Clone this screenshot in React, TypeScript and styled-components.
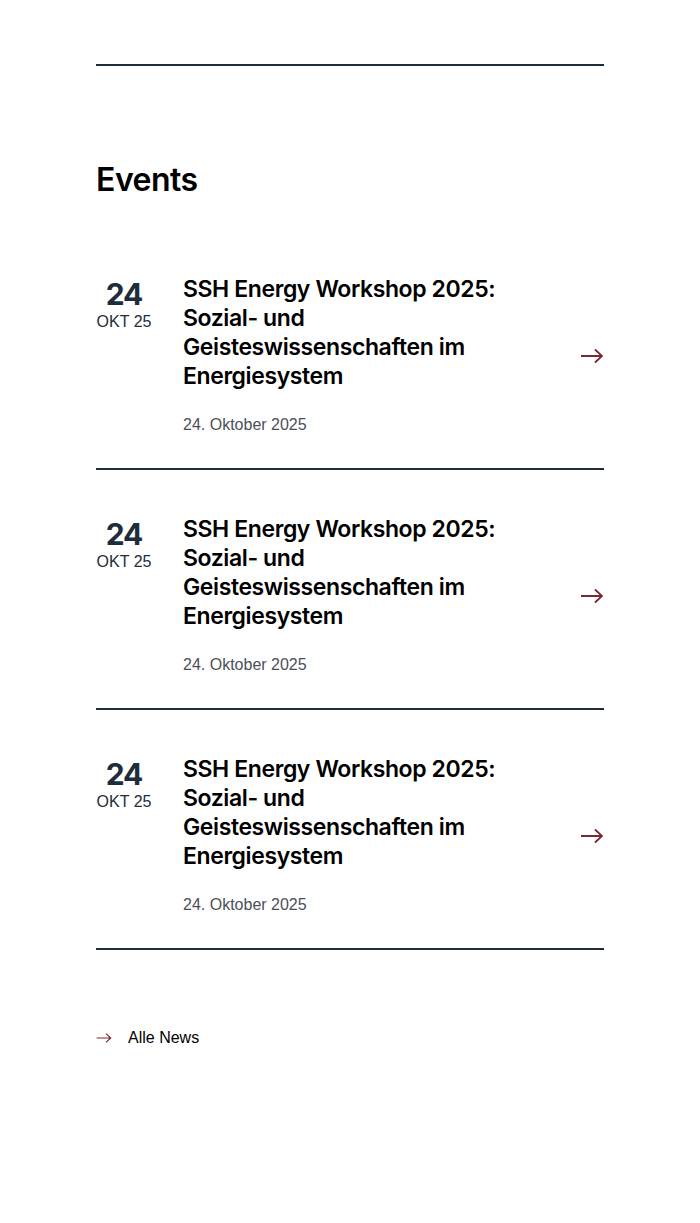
import React from "react";
import styled, { createGlobalStyle } from "styled-components";

const GlobalStyle = createGlobalStyle`
  html, body {
    margin: 0;
    padding: 0;
    background: #fff;
    font-family: "Liberation Sans", Arial, sans-serif;
  }
`;

interface EventItem {
  day: string;
  month: string;
  title: string;
  date: string;
}

const events: EventItem[] = [
  {
    day: "24",
    month: "OKT 25",
    title: "SSH Energy Workshop 2025: Sozial- und Geisteswissenschaften im Energiesystem",
    date: "24. Oktober 2025",
  },
  {
    day: "24",
    month: "OKT 25",
    title: "SSH Energy Workshop 2025: Sozial- und Geisteswissenschaften im Energiesystem",
    date: "24. Oktober 2025",
  },
  {
    day: "24",
    month: "OKT 25",
    title: "SSH Energy Workshop 2025: Sozial- und Geisteswissenschaften im Energiesystem",
    date: "24. Oktober 2025",
  },
];

const Arrow = ({ size = 24 }: { size?: number }) => (
  <svg width={size} height={size} viewBox="0 0 24 24" fill="none">
    <path
      d="M1 12H22M15 5.5L22 12L15 18.5"
      stroke="#7a2832"
      strokeWidth="1.8"
      strokeLinecap="butt"
      strokeLinejoin="miter"
    />
  </svg>
);

const App = () => {
  return (
    <>
      <GlobalStyle />
      <Wrapper>
        <TopRule />
        <Heading>Events</Heading>
        <List>
          {events.map((ev, i) => (
            <Row key={i}>
              <DateBox>
                <Day>{ev.day}</Day>
                <Month>{ev.month}</Month>
              </DateBox>
              <Body>
                <Title>{ev.title}</Title>
                <Meta>{ev.date}</Meta>
              </Body>
              <RowArrow>
                <Arrow />
              </RowArrow>
            </Row>
          ))}
        </List>
        <MoreLink>
          <Arrow size={16} />
          <span>Alle News</span>
        </MoreLink>
      </Wrapper>
    </>
  );
};

const Wrapper = styled.div`
  width: 508px;
  margin: 0 auto;
  padding-top: 64px;
  padding-bottom: 160px;
`;

const TopRule = styled.div`
  height: 2px;
  background: #1e2d3a;
`;

const Heading = styled.h2`
  font-family: Inter, "Liberation Sans", sans-serif;
  font-size: 32px;
  font-weight: 600;
  letter-spacing: -0.5px;
  line-height: 40px;
  color: #000;
  margin: 94px 0 30px;
`;

const List = styled.div`
  display: flex;
  flex-direction: column;
`;

const Row = styled.div`
  display: flex;
  align-items: center;
  padding: 45px 0 31px;
  border-bottom: 2px solid #1e2d3a;
`;

const DateBox = styled.div`
  align-self: flex-start;
  display: flex;
  flex-direction: column;
  align-items: center;
  width: 56px;
  margin-right: 31px;
`;

const Day = styled.div`
  font-family: Inter, "Liberation Sans", sans-serif;
  font-size: 30px;
  font-weight: 700;
  letter-spacing: -1px;
  line-height: 26px;
  color: #1e2d3a;
  margin-top: 6px;
`;

const Month = styled.div`
  font-size: 16px;
  line-height: 18px;
  margin-top: 6px;
  color: #1e2d3a;
`;

const Body = styled.div`
  flex: 1;
  display: flex;
  flex-direction: column;
  gap: 22px;
`;

const Title = styled.div`
  font-family: Inter, "Liberation Sans", sans-serif;
  font-size: 23px;
  font-weight: 600;
  letter-spacing: -0.4px;
  line-height: 29px;
  color: #000;
  max-width: 330px;
`;

const Meta = styled.div`
  font-size: 16px;
  line-height: 24px;
  color: #4a5058;
`;

const RowArrow = styled.div`
  display: flex;
  width: 24px;
  justify-content: flex-end;
`;

const MoreLink = styled.a`
  display: flex;
  align-items: center;
  gap: 16px;
  margin-top: 78px;
  font-size: 16px;
  color: #000;
  text-decoration: none;
  line-height: 20px;
`;

export default App;
